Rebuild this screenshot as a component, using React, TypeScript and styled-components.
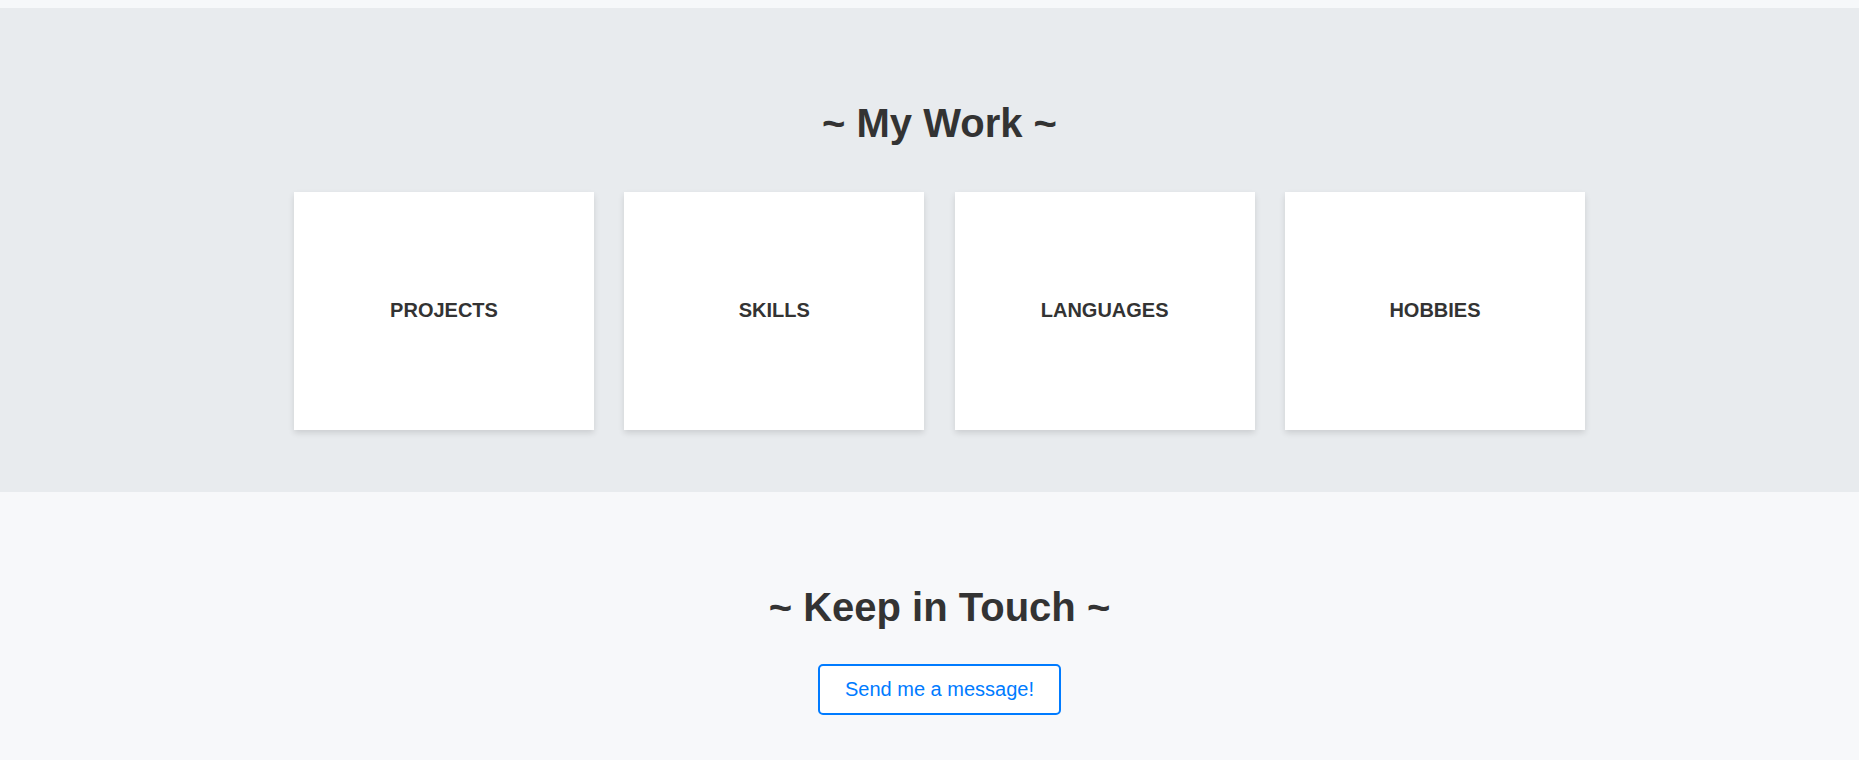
import React from "react";
import styled, { createGlobalStyle } from "styled-components";

const GlobalStyle = createGlobalStyle`
  html, body {
    margin: 0;
    padding: 0;
    background: #f7f8fa;
    font-family: "Liberation Sans", Arial, Helvetica, sans-serif;
    color: #333333;
  }
  * { box-sizing: border-box; }
`;

const TopStrip = styled.div`
  height: 8px;
  background: #f6f8fa;
`;

const Section = styled.section<{ $tone: "dark" | "light" }>`
  background: ${(p) => (p.$tone === "dark" ? "#e8ebee" : "#f7f8fa")};
  display: flex;
  flex-direction: column;
  align-items: center;
  padding: ${(p) => (p.$tone === "dark" ? "91px 0 62px 20px" : "91px 0 45px 20px")};
`;

const Heading = styled.h2<{ $gap: number }>`
  margin: 0 0 ${(p) => p.$gap}px;
  font-size: 40px;
  line-height: 48px;
  font-weight: 700;
  color: #333333;
  text-align: center;
`;

const CardGrid = styled.div`
  display: grid;
  grid-template-columns: repeat(4, 300px);
  column-gap: 30.33px;
`;

const Card = styled.div`
  height: 238px;
  background: #ffffff;
  box-shadow: 0 3px 6px rgba(0, 0, 0, 0.12);
  display: flex;
  align-items: center;
  justify-content: center;
  padding-bottom: 1px;
  font-size: 20px;
  font-weight: 700;
  color: #333333;
  text-transform: uppercase;
`;

const MessageButton = styled.button`
  height: 51px;
  padding: 0 25px;
  border: 2px solid #007bff;
  border-radius: 5px;
  background: #ffffff;
  color: #007bff;
  font-family: "Liberation Sans", Arial, Helvetica, sans-serif;
  font-size: 20px;
  line-height: 23px;
  cursor: pointer;
`;

const items = ["Projects", "Skills", "Languages", "Hobbies"];

export default function App() {
  return (
    <>
      <GlobalStyle />
      <TopStrip />
      <Section $tone="dark">
        <Heading $gap={45}>~ My Work ~</Heading>
        <CardGrid>
          {items.map((it) => (
            <Card key={it}>{it}</Card>
          ))}
        </CardGrid>
      </Section>
      <Section $tone="light">
        <Heading $gap={33}>~ Keep in Touch ~</Heading>
        <MessageButton>Send me a message!</MessageButton>
      </Section>
    </>
  );
}
